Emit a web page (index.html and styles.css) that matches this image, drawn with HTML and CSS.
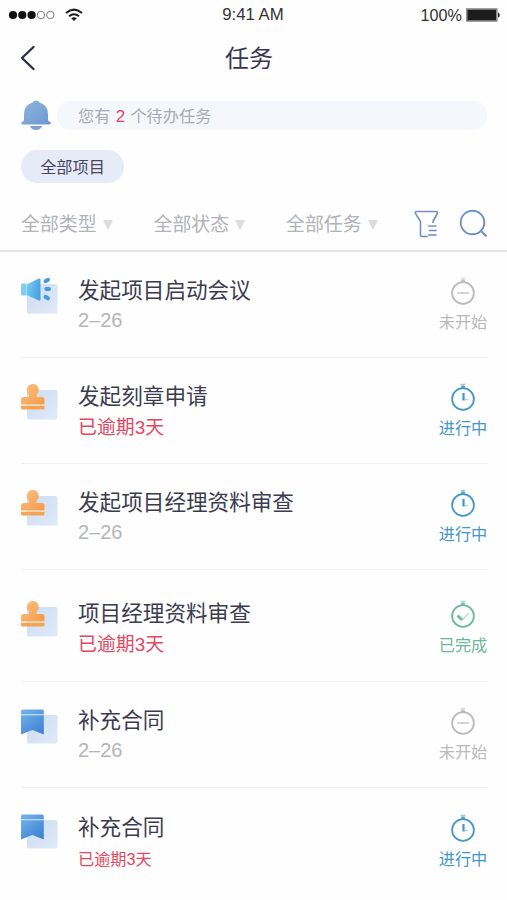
FILE: index.html
```html
<!DOCTYPE html>
<html lang="zh-CN">
<head>
<meta charset="utf-8">
<title>任务</title>
<link rel="stylesheet" href="styles.css">
</head>
<body>
<svg class="defs" width="0" height="0" aria-hidden="true">
  <defs>
    <linearGradient id="gBell" x1="0" y1="0" x2="1" y2="1"><stop offset="0" stop-color="#92b5df"/><stop offset="1" stop-color="#6b98d0"/></linearGradient>
    <linearGradient id="gSquare" x1="0" y1="0" x2="1" y2="1"><stop offset="0" stop-color="#cdddf3"/><stop offset="1" stop-color="#dfe9f8"/></linearGradient>
    <linearGradient id="gOrange" x1="0" y1="0" x2="1" y2="1"><stop offset="0" stop-color="#fdc184"/><stop offset="1" stop-color="#f69a45"/></linearGradient>
    <linearGradient id="gBlue" x1="0" y1="0" x2="0.7" y2="1"><stop offset="0" stop-color="#75b5ec"/><stop offset="1" stop-color="#4084d4"/></linearGradient>
    <linearGradient id="gCyan" x1="0" y1="0" x2="1" y2="0.3"><stop offset="0" stop-color="#7dcef7"/><stop offset="1" stop-color="#4aa2e2"/></linearGradient>
    <linearGradient id="gLine" x1="0" y1="0" x2="1" y2="1"><stop offset="0" stop-color="#7896c8"/><stop offset="1" stop-color="#6486c2"/></linearGradient>
  </defs>
  <symbol id="horn" viewBox="0 0 37 38">
    <rect x="6" y="8" width="30.500" height="29.500" rx="2" fill="url(#gSquare)"/>
    <rect x="0" y="7.500" width="5.300" height="12" rx="1.500" fill="#7fcdf5"/>
    <path d="M5.500 8.500 L18 2.500 Q19.500 2 19.500 4 V23.500 Q19.500 25 18 24.500 L5.500 19Z" fill="url(#gCyan)"/>
    <g stroke="#4599dc" stroke-width="4" stroke-linecap="round"><path d="M24.500 5.200 L27 3.800M25.300 13H28M24.500 20.800L27 22.300"/></g>
  </symbol>
  <symbol id="stamp" viewBox="0 0 37 38">
    <rect x="6" y="8" width="30.500" height="29.500" rx="2" fill="url(#gSquare)"/>
    <path d="M11.700 2a5.900 5.900 0 0 1 3.800 10.500v2.500H21q2.500 0 2.500 2.500V22.500H0V17.500Q0 15 2.500 15H8V12.500a5.900 5.900 0 0 1 3.700-10.500z" fill="url(#gOrange)"/>
    <path d="M0 23.800H23.500V26Q23.500 27.500 22 27.500H1.500Q0 27.500 0 26Z" fill="#f6a354"/>
    <path d="M0 23.100H23.500" stroke="#fddcb8" stroke-width="1"/>
  </symbol>
  <symbol id="mark" viewBox="0 0 37 38">
    <rect x="6" y="9" width="30.500" height="28.500" rx="2" fill="url(#gSquare)"/>
    <path d="M0 5Q0 3.500 1.500 3.500H21.300Q22.800 3.500 22.800 5V28.500L11.400 24L0 28.500Z" fill="url(#gBlue)"/>
    <path d="M0 8.700H22.800" stroke="#c3dff8" stroke-width="1.200"/>
  </symbol>
  <symbol id="watch" viewBox="0 0 28 30">
    <circle cx="14" cy="17" r="10.900" fill="none" stroke="currentColor" stroke-width="1.800"/>
    <path d="M11.200 1.800H16.800L14 5.500Z" fill="currentColor" opacity=".55"/>
    <path d="M12 5H16" stroke="currentColor" stroke-width="1.600"/>
  </symbol>
</svg>

<main class="screen">
  <div class="status-bar">
    <div class="signal">
      <svg width="48" height="12" viewBox="0 0 48 12"><g fill="#111"><circle cx="5" cy="6" r="4.100"/><circle cx="14.300" cy="6" r="4.100"/><circle cx="23.600" cy="6" r="4.100"/></g><g fill="none" stroke="#777" stroke-width="1"><circle cx="32.900" cy="6" r="3.700"/><circle cx="42.300" cy="6" r="3.700"/></g></svg>
      <svg class="wifi" width="18" height="14" viewBox="0 0 18 14"><g fill="none" stroke="#1c1c1c" stroke-width="2"><path d="M1 5Q9-1.800 17 5M4 8.200Q9 4.200 14 8.200"/></g><path d="M6.200 10.200Q9 8.200 11.800 10.200L9 13Z" fill="#1c1c1c"/></svg>
    </div>
    <span class="clock">9:41 AM</span>
    <div class="power"><span>100%</span>
      <svg width="34" height="14" viewBox="0 0 34 14"><rect x=".8" y="1" width="30" height="12" fill="#1c1c1c" stroke="#8a8a8a" stroke-width="1.600"/><path d="M32 4.500Q33.800 4.500 33.800 7T32 9.500Z" fill="#333"/></svg>
    </div>
  </div>

  <header class="nav">
    <svg class="back" width="16" height="26" viewBox="0 0 16 26"><path d="M13.500 2L2 13L13.500 24" fill="none" stroke="#2d2c49" stroke-width="2.400" stroke-linecap="round" stroke-linejoin="round"/></svg>
    <h1>任务</h1>
  </header>

  <div class="notice">
    <svg width="30" height="31" viewBox="0 0 30 31"><path d="M15 .5Q17.600.5 18.500 2.600Q27 5.500 27 14V20.500L29.500 22.300Q30.300 24.500 28 24.500H2Q-.3 24.500.5 22.300L3 20.500V14Q3 5.500 11.500 2.600Q12.400.5 15 .5Z" fill="url(#gBell)"/><path d="M9 26H21Q19.500 30 15 30T9 26Z" fill="#7c9fd8"/></svg>
    <p>您有 <b>2</b> 个待办任务</p>
  </div>

  <div class="project"><button>全部项目</button></div>

  <div class="filters">
    <span class="filter">全部类型<i></i></span>
    <span class="filter">全部状态<i></i></span>
    <span class="filter">全部任务<i></i></span>
    <svg class="funnel" width="25" height="28" viewBox="0 0 25 28"><g fill="none" stroke="url(#gLine)" stroke-width="1.600" stroke-linejoin="round" stroke-linecap="round"><path d="M19 12.500V11.500L23.300 3.500Q24 1.500 22 1.500H2.500Q.6 1.500 1.500 3.500L6.500 11.500V25Q6.500 26.500 8 26.500H13"/><path d="M14.500 16H22M15.500 20.500H22M14.500 25H22"/></g></svg>
    <svg class="search" width="29" height="29" viewBox="0 0 29 29"><g fill="none" stroke="url(#gLine)" stroke-width="1.900" stroke-linecap="round"><circle cx="13.500" cy="13.500" r="11.800"/><path d="M21.800 21.800L27 26.800"/></g></svg>
  </div>

  <section class="tasks">
    <article class="task">
      <svg class="kind"><use href="#horn"/></svg>
      <div class="info"><h2>发起项目启动会议</h2><p class="date">2–26</p></div>
      <div class="state idle"><svg width="28" height="30" viewBox="0 0 28 30"><use href="#watch"/><path d="M8 17H20" stroke="currentColor" stroke-width="1.500" opacity=".8"/></svg><span>未开始</span></div>
    </article>
    <article class="task">
      <svg class="kind"><use href="#stamp"/></svg>
      <div class="info"><h2>发起刻章申请</h2><p class="late">已逾期3天</p></div>
      <div class="state active"><svg width="28" height="30" viewBox="0 0 28 30"><use href="#watch"/><path d="M14.500 11V18.500" stroke="currentColor" stroke-width="2.200"/><path d="M15.500 17.700H19" stroke="currentColor" stroke-width="1.200" opacity=".45"/></svg><span>进行中</span></div>
    </article>
    <article class="task">
      <svg class="kind"><use href="#stamp"/></svg>
      <div class="info"><h2>发起项目经理资料审查</h2><p class="date">2–26</p></div>
      <div class="state active"><svg width="28" height="30" viewBox="0 0 28 30"><use href="#watch"/><path d="M14.500 11V18.500" stroke="currentColor" stroke-width="2.200"/><path d="M15.500 17.700H19" stroke="currentColor" stroke-width="1.200" opacity=".45"/></svg><span>进行中</span></div>
    </article>
    <article class="task tall">
      <svg class="kind"><use href="#stamp"/></svg>
      <div class="info"><h2>项目经理资料审查</h2><p class="late">已逾期3天</p></div>
      <div class="state done"><svg width="28" height="30" viewBox="0 0 28 30"><use href="#watch"/><path d="M8.500 16.500L13 21" stroke="currentColor" stroke-width="2.600"/><path d="M13 21L20 14" stroke="currentColor" stroke-width="1.600" opacity=".45"/></svg><span>已完成</span></div>
    </article>
    <article class="task">
      <svg class="kind"><use href="#mark"/></svg>
      <div class="info"><h2>补充合同</h2><p class="date">2–26</p></div>
      <div class="state idle"><svg width="28" height="30" viewBox="0 0 28 30"><use href="#watch"/><path d="M8 17H20" stroke="currentColor" stroke-width="1.500" opacity=".8"/></svg><span>未开始</span></div>
    </article>
    <article class="task last">
      <svg class="kind"><use href="#mark"/></svg>
      <div class="info"><h2>补充合同</h2><p class="late small">已逾期3天</p></div>
      <div class="state active"><svg width="28" height="30" viewBox="0 0 28 30"><use href="#watch"/><path d="M14.500 11V18.500" stroke="currentColor" stroke-width="2.200"/><path d="M15.500 17.700H19" stroke="currentColor" stroke-width="1.200" opacity=".45"/></svg><span>进行中</span></div>
    </article>
  </section>
</main>
</body>
</html>
```

FILE: styles.css
```css
* { box-sizing: border-box; }
body { margin: 0; background: #fefefe; font-family: "Liberation Sans", "Noto Sans CJK SC", sans-serif; color: #37384f; }
h1, h2, p { margin: 0; font-weight: 400; }
svg { display: block; flex: none; }
.defs { position: absolute; }
.screen { width: 507px; height: 900px; overflow: hidden; }

.status-bar { display: grid; grid-template-columns: 1fr auto 1fr; align-items: center; height: 30px; padding: 0 7px 0 8px; font-size: 16.200px; line-height: 30px; color: #333; }
.signal, .power { display: flex; align-items: center; }
.signal, .power svg { margin-top: -1px; }
.wifi { margin-left: 9px; }
.clock { padding-right: 2px; font-size: 16.800px; }
.power { justify-content: flex-end; gap: 4px; }

.nav { display: grid; grid-template-columns: 36px 1fr 45px; align-items: center; height: 56px; padding: 0 0 0 20px; }
.nav h1 { text-align: center; font-size: 24px; line-height: 36px; padding: 1px 20px 0 0; color: #37384f; }

.notice { display: flex; align-items: center; height: 58px; padding: 0 20px 0 21px; gap: 6px; }
.notice p { flex: 1; height: 29px; padding-left: 21px; border-radius: 14px; background: #f4f7fc; font-size: 16.200px; line-height: 30px; color: #a6abb3; white-space: pre; }
.notice b { margin: 0 0.800px; font-weight: 400; font-size: 17px; color: #e2446c; }

.project { height: 52px; padding: 6px 21px; }
.project button { display: block; width: 103px; height: 33px; padding: 0; border: 0; border-radius: 17px; background: #e6ebf7; font: inherit; font-size: 16.200px; line-height: 32px; color: #44475f; }

.filters { display: grid; grid-template-columns: 132.500px 132.500px 128px 45px 28px; align-items: center; height: 56px; padding: 1px 0 0 21px; border-bottom: 2px solid #e4e4e4; }
.filter { display: flex; align-items: center; gap: 6px; padding-top: 2px; font-size: 18.900px; line-height: 30px; color: #b0b3b7; }
.filter i { border: solid transparent; border-width: 10px 5.500px 0; border-top-color: #dcdcde; }

.task { display: grid; grid-template-columns: 57px 1fr 50px; height: 106px; margin: 0 19px 0 21px; padding-top: 24px; border-bottom: 1px solid #eeeff1; }
.task.tall { height: 112px; padding-top: 29px; }
.task.last { padding-top: 25px; border: 0; }
.kind { width: 37px; height: 38px; }
.last .kind { margin-top: -2px; }
.info h2 { font-size: 21.600px; line-height: 30px; color: #3b3c50; white-space: nowrap; }
.info .date { font-size: 20px; line-height: 29px; color: #b3b5b9; }
.info .late { font-size: 18.900px; line-height: 32px; color: #e4475e; }
.info .late.small { font-size: 16.200px; line-height: 33px; }
.state { display: flex; flex-direction: column; align-items: center; font-size: 16.200px; white-space: nowrap; }
.state span { padding-top: 1px; line-height: 30px; }
.idle { color: #b9babc; }
.active { color: #4796c9; }
.done { color: #6db999; }
```
